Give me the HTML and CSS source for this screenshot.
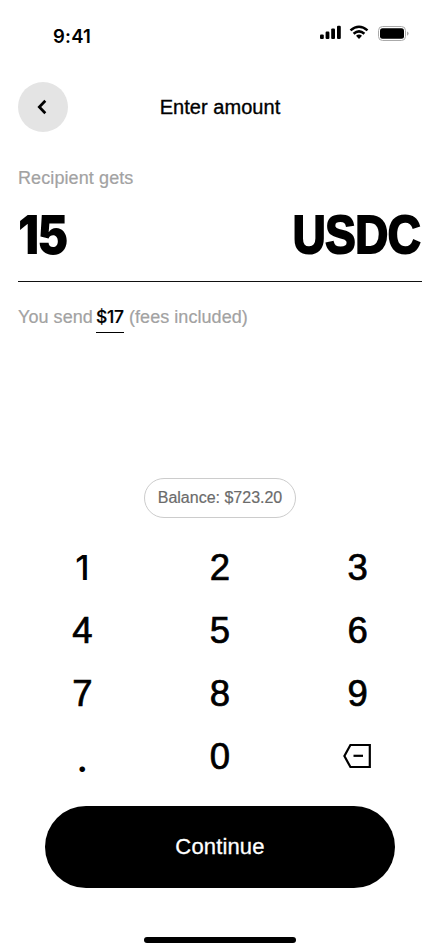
FILE: index.html
```html
<!DOCTYPE html>
<html lang="en">
<head>
<meta charset="utf-8">
<meta name="viewport" content="width=device-width">
<title>Enter amount</title>
<link rel="stylesheet" href="styles.css">
</head>
<body>
<main class="screen">
  <div class="status">
    <span class="time">9:41</span>
    <svg class="status-icons" width="90" height="18" viewBox="0 0 90 18">
      <rect x="0" y="10.5" width="3.8" height="4.5" rx="1.1"/>
      <rect x="5.6" y="7.6" width="3.8" height="7.4" rx="1.1"/>
      <rect x="11.2" y="4.4" width="3.8" height="10.6" rx="1.1"/>
      <rect x="17" y="1.8" width="3.8" height="13.2" rx="1.1"/>
      <g fill="none" stroke="#000" stroke-width="2.5">
        <path d="M30.5 6.4Q39 -1 47.5 6.4"/>
        <path d="M33.6 9.8Q39 5 44.4 9.8"/>
      </g>
      <path d="M36 11.7Q39 9.4 42 11.7L39 15Z"/>
      <rect x="58.5" y="2.500" width="27" height="14" rx="4" fill="none" stroke="#aaa"/>
      <rect x="60" y="4.200" width="24" height="10.600" rx="2.5"/>
      <path d="M87 7.500v4.2q1.6-.6 1.6-2.1T87 7.500Z" fill="#aaa"/>
    </svg>
  </div>
  <header class="header">
    <button class="back" aria-label="Back">
      <svg width="50" height="50" viewBox="0 0 50 50"><path d="M27.300 18.800L21.300 25L27.300 31.300" fill="none" stroke="#000" stroke-width="2.700"/></svg>
    </button>
    <h1 class="title">Enter amount</h1>
  </header>
  <p class="label">Recipient gets</p>
  <div class="amount">
    <span class="value">15</span>
    <span class="currency">USDC</span>
  </div>
  <p class="send"><span class="send-before">You send</span><span class="sum">$17</span><span class="fees">(fees included)</span></p>
  <div class="balance">Balance: $723.20</div>
  <div class="keypad">
    <button class="key key-one">1</button><button class="key">2</button><button class="key">3</button>
    <button class="key">4</button><button class="key">5</button><button class="key">6</button>
    <button class="key">7</button><button class="key">8</button><button class="key">9</button>
    <button class="key key-point">.</button><button class="key">0</button>
    <button class="key key-delete" aria-label="Delete">
      <svg width="30" height="26" viewBox="0 0 30 26" fill="none" stroke="#000" stroke-width="2.200"><path d="M7.400 2H26.800v22H7.400L1.400 13Z"/><path d="M10.500 12.800h9.500"/></svg>
    </button>
  </div>
  <button class="continue">Continue</button>
  <div class="home"></div>
</main>
</body>
</html>
```
FILE: styles.css
```css
* { box-sizing: border-box; }
body { margin: 0; background: #fff; }
p, h1 { margin: 0; font-weight: 400; }
button { border: 0; padding: 0; background: none; color: inherit; font: inherit; }
svg { display: block; }

.screen {
  width: 440px;
  height: 952px;
  overflow: hidden;
  display: flex;
  flex-direction: column;
  background: #fff;
  color: #000;
  font-family: "Liberation Sans", Arial, sans-serif;
}

.status {
  height: 82px;
  padding: 24px 30px 0 53px;
  display: flex;
  justify-content: space-between;
}
.time {
  font: 600 18.5px/24px Inter, sans-serif;
  letter-spacing: 0.2px;
}

.header {
  height: 50px;
  padding: 0 18px;
  display: grid;
  grid-template-columns: 50px 1fr 50px;
  align-items: center;
}
.back { width: 50px; height: 50px; border-radius: 50%; background: #e4e4e4; }
.title {
  text-align: center;
  font-size: 20px;
  line-height: 24px;
  letter-spacing: 0.05px;
  -webkit-text-stroke: 0.35px;
}

.label {
  margin: 35px 18px 0;
  height: 22px;
  font-size: 18px;
  line-height: 22px;
  letter-spacing: 0.1px;
  color: #a2a2a2;
  -webkit-text-stroke: 0.2px;
}

.amount {
  height: 93px;
  margin: 0 18px;
  padding-top: 16px;
  display: flex;
  justify-content: space-between;
  border-bottom: 1.500px solid #111;
  line-height: 60px;
}
.value {
  font-family: Inter, sans-serif;
  font-size: 53px;
  font-weight: 900;
  letter-spacing: -2px;
  transform: scaleX(0.88);
  transform-origin: left;
}
.currency {
  margin-right: 2px;
  font-size: 53px;
  font-weight: 700;
  letter-spacing: -0.5px;
  transform: scaleX(0.86);
  transform-origin: right;
  -webkit-text-stroke: 2.2px;
}

.send {
  display: flex;
  margin: 24px 18px 0;
  height: 28px;
  font-size: 18px;
  line-height: 22px;
  letter-spacing: 0.05px;
  color: #a2a2a2;
  -webkit-text-stroke: 0.2px;
}
.send-before { width: 78px; }
.sum {
  width: 28px;
  height: 27px;
  border-bottom: 1.500px solid #000;
  margin-right: 5px;
  font: 500 17.5px/22px Inter, sans-serif;
  letter-spacing: -0.3px;
  color: #000;
}

.balance {
  width: 152px;
  height: 40px;
  margin: 144px auto 0;
  border: 1px solid #ccc;
  border-radius: 20px;
  font-size: 16px;
  line-height: 38px;
  text-align: center;
  white-space: nowrap;
  color: #6b6b6b;
  -webkit-text-stroke: 0.2px;
}

.keypad {
  width: 413px;
  margin: 17px auto 0;
  display: grid;
  grid-template-columns: repeat(3, 1fr);
  grid-auto-rows: 63px;
}
.key {
  display: flex;
  align-items: center;
  justify-content: center;
  padding-top: 2px;
  font-size: 36.5px;
  line-height: 61px;
  -webkit-text-stroke: 0.7px;
}
.key-one { font: 500 34.5px/61px Inter, sans-serif; -webkit-text-stroke: 0; }
.key-point { padding-top: 7px; font: 600 36px/56px Inter, sans-serif; -webkit-text-stroke: 0; }
.key-delete { padding-top: 0; }

.continue {
  width: 350px;
  height: 82px;
  margin: 19px auto 0;
  border-radius: 41px;
  background: #000;
  color: #fff;
  font-size: 22px;
  letter-spacing: 0.15px;
  -webkit-text-stroke: 0.3px;
}
.home { width: 152px; height: 6px; margin: 49px auto 0; border-radius: 3px; background: #000; }
```
